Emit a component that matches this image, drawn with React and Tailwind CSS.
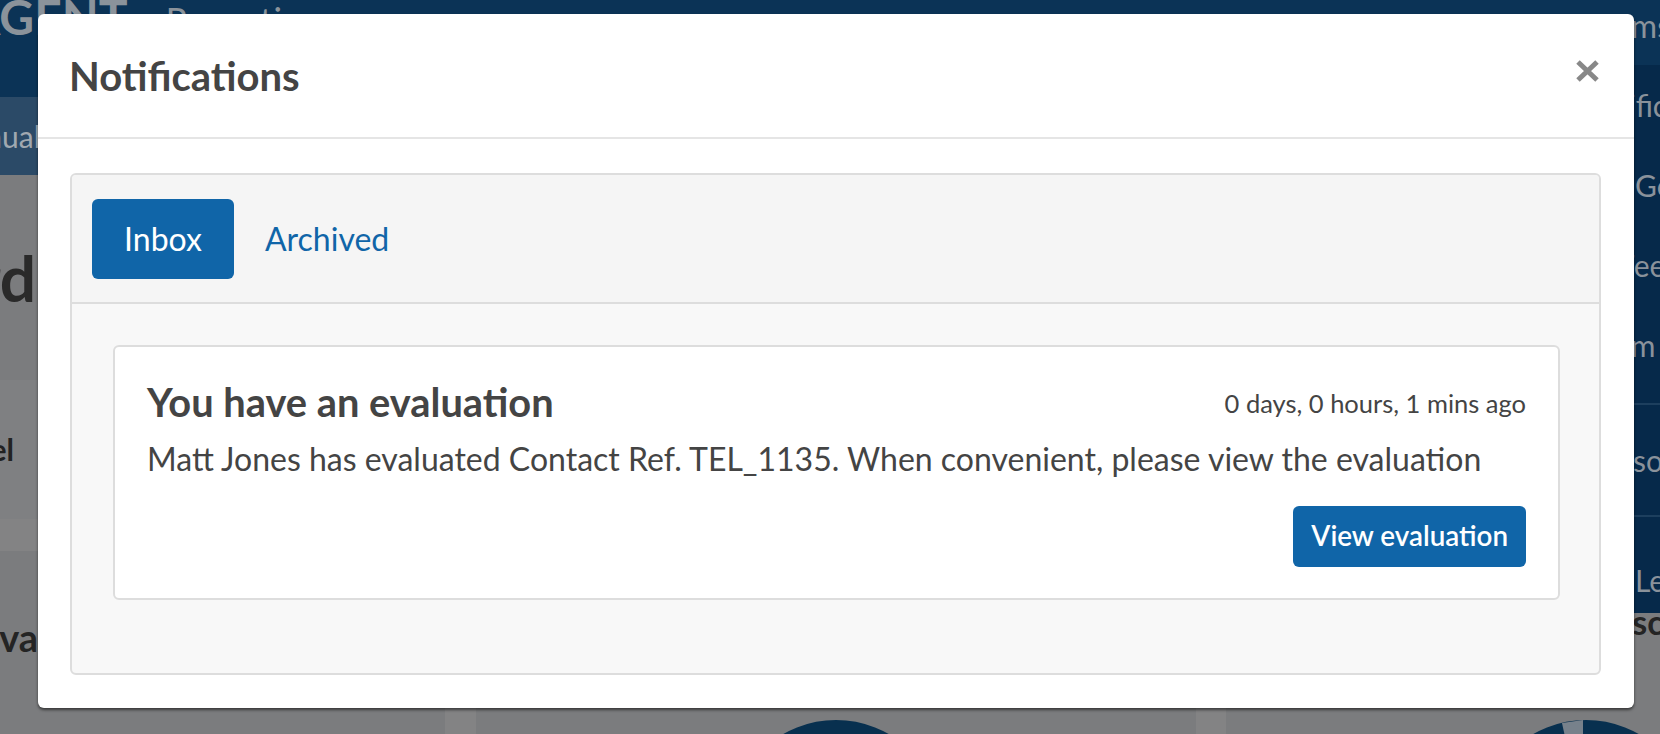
import { useState } from "react";

const Donut = ({ wedge, className }) => (
  <svg width="240" height="240" viewBox="0 0 240 240" className={`mx-auto shrink-0 ${className}`}>
    <circle cx="120" cy="120" r="86" fill="none" stroke="#08304f" strokeWidth="40" />
    {wedge && <path d="M117 14 L96 17 L104 54 L117 53 Z" fill="#77818b" />}
  </svg>
);

const BackgroundPage = () => (
  <div className="flex h-full flex-col">
    <nav className="flex h-[97px] shrink-0 items-start overflow-hidden bg-[#0b3356] text-[#8b939b]">
      <span className="-ml-[33px] -mt-[7px] text-[48px] font-bold leading-none">AGENT</span>
      <span className="ml-[38px] mt-[2px] text-[36px] leading-none">Reporting</span>
      <div className="-mr-[11px] ml-auto mt-[10px] flex gap-[40px] text-[32px] leading-none">
        <span>Help</span>
        <span>Teams</span>
      </div>
    </nav>
    <div className="flex h-[78px] shrink-0 items-center overflow-hidden bg-[#2b4a67] text-[#a0a8b0]">
      <span className="-ml-[57px] text-[30px]">Manual</span>
    </div>
    <main className="flex flex-1 flex-col">
      <div className="flex h-[205px] shrink-0 items-center">
        <div className="flex w-[36px] justify-end overflow-hidden">
          <h1 className="whitespace-nowrap text-[64px] font-bold text-[#2a2a2a]">Dashboard</h1>
        </div>
      </div>
      <div className="flex h-[139px] shrink-0 items-center bg-[#7f8082]">
        <div className="flex w-[14px] justify-end overflow-hidden">
          <span className="whitespace-nowrap text-[30px] font-bold text-[#222]">Channel</span>
        </div>
      </div>
      <div className="flex flex-1 gap-[31px] bg-[#838384] pt-[32px]">
        <section className="w-[445px] shrink-0 bg-[#7b7c7e]">
          <h2 className="-ml-[22px] mt-[58px] whitespace-nowrap text-[38px] font-bold text-[#242424]">Evaluations</h2>
        </section>
        <section className="flex w-[720px] shrink-0 flex-col bg-[#7b7c7e]">
          <Donut className="mt-[155px]" />
        </section>
        <section className="-ml-[1px] flex w-[720px] shrink-0 flex-col bg-[#7b7c7e]">
          <h2 className="ml-[372px] mt-[54px] whitespace-nowrap text-[34px] font-bold leading-none text-[#242424]">
            Discussions
          </h2>
          <Donut wedge className="mt-[67px]" />
        </section>
      </div>
    </main>
  </div>
);

const AccountMenu = () => (
  <div className="absolute left-[1560px] top-[65px] flex h-[548px] w-[300px] flex-col bg-[#06294a] text-[30px] text-[#8a929b]">
    <div className="flex h-[80px] items-center pl-[18px]">Notifications</div>
    <div className="flex h-[80px] items-center pl-[75px]">General</div>
    <div className="flex h-[80px] items-center pl-[58px]">Feedback</div>
    <div className="flex h-[80px] items-center pl-[26px]">Team</div>
    <div className="mt-[18px] flex h-[114px] items-center border-y-2 border-[#1d3f5e] pl-[29px]">Personal</div>
    <div className="flex flex-1 items-center pl-[75px] pt-[30px]">Leave</div>
  </div>
);

const NotificationCard = () => (
  <div className="rounded-[6px] border-2 border-[#dddddd] bg-white px-[32px] pb-[31px] pt-[33px] text-[#444]">
    <div className="flex items-start justify-between">
      <h3 className="text-[39.8px] font-bold leading-[1.1]">You have an evaluation</h3>
      <span className="mt-[4px] text-[25.5px] leading-[1.5]">0 days, 0 hours, 1 mins ago</span>
    </div>
    <p className="mt-[11px] text-[32px] leading-[1.5]">
      Matt Jones has evaluated Contact Ref. TEL_1135. When convenient, please view the evaluation
    </p>
    <div className="mt-[23px] flex justify-end">
      <button className="h-[61px] rounded-[6px] bg-[#1065a8] px-[18px] text-[27.8px] font-semibold text-white">
        View evaluation
      </button>
    </div>
  </div>
);

const NotificationsModal = () => {
  const [tab, setTab] = useState("inbox");

  return (
    <div className="absolute left-[38px] top-[14px] flex h-[694px] w-[1596px] flex-col rounded-[6px] bg-white shadow-[0_2px_3px_rgba(0,0,0,0.55)]">
      <div className="flex h-[125px] shrink-0 items-center justify-between border-b-2 border-[#e5e5e5] pl-[31px] pr-[35px]">
        <h4 className="text-[40px] font-bold leading-none text-[#444]">Notifications</h4>
        <button aria-label="Close" className="-mt-[10px] flex h-[22px] w-[23px] items-center justify-center">
          <svg width="23" height="22" viewBox="0 0 23 22">
            <path d="M2 2 L21 20 M21 2 L2 20" stroke="#888" strokeWidth="5" />
          </svg>
        </button>
      </div>
      <div className="flex flex-1 flex-col pb-[33px] pl-[32px] pr-[33px] pt-[34px]">
        <div className="flex flex-1 flex-col overflow-hidden rounded-[6px] border-2 border-[#dddddd] bg-[#f8f8f8]">
          <div className="flex h-[129px] shrink-0 items-center border-b-2 border-[#dddddd] bg-[#f5f5f5] pl-[20px]">
            <button
              onClick={() => setTab("inbox")}
              className="h-[80px] w-[142px] rounded-[6px] bg-[#1065a8] text-[32px] text-white"
            >
              Inbox
            </button>
            <button onClick={() => setTab("archived")} className="ml-[31px] text-[32px] text-[#1065a8]">
              Archived
            </button>
          </div>
          <div className="pl-[41px] pr-[39px] pt-[41px]">{tab === "inbox" && <NotificationCard />}</div>
        </div>
      </div>
    </div>
  );
};

export default function App() {
  return (
    <div className="relative h-[734px] w-[1660px] overflow-hidden bg-[#7b7c7e] font-['Lato','Liberation_Sans',sans-serif]">
      <BackgroundPage />
      <AccountMenu />
      <NotificationsModal />
    </div>
  );
}
